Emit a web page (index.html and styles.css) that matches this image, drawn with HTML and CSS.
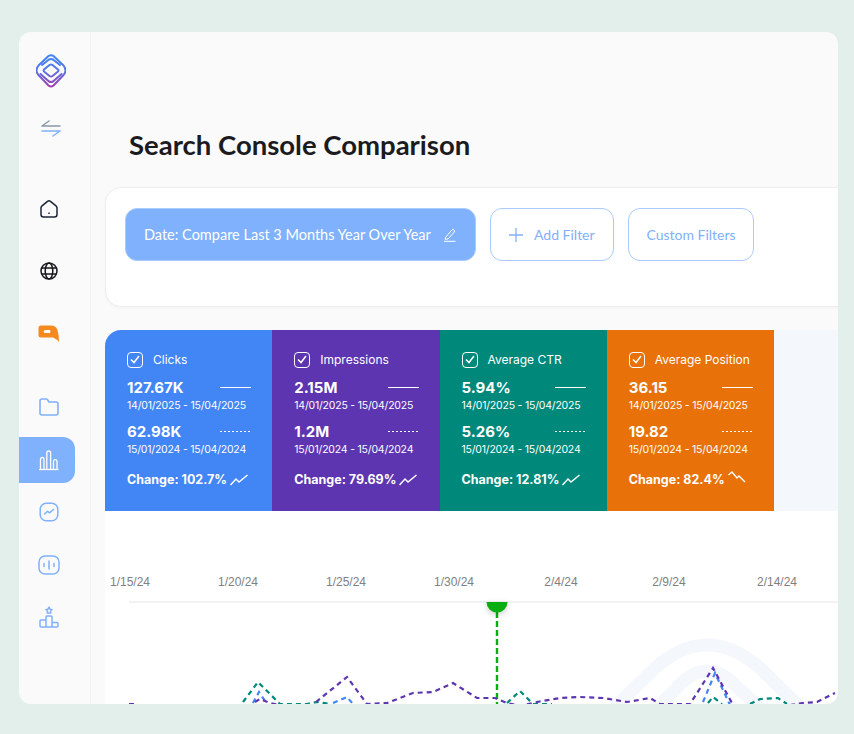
FILE: index.html
```html
<!DOCTYPE html>
<html lang="en">
<head>
    <meta charset="UTF-8">
    <meta name="viewport" content="width=device-width, initial-scale=1.0">
    <title>Search Console Comparison</title>
    <link rel="stylesheet" href="styles.css">
</head>
<body>
    <div class="app">
        <!-- sidebar -->
        <div class="sidebar">
            <svg class="logo" width="30" height="34" viewBox="0 0 30 34" fill="none" stroke="url(#logo-grad)" stroke-width="2" stroke-linecap="round" stroke-linejoin="round">
                <defs>
                    <linearGradient id="logo-grad" gradientUnits="userSpaceOnUse" x1="0" y1="4" x2="0" y2="32">
                        <stop offset="0" stop-color="#3f83f4"/>
                        <stop offset="0.5" stop-color="#5f6fe0"/>
                        <stop offset="1" stop-color="#a040b0"/>
                    </linearGradient>
                </defs>
                <path d="M12.500 2Q15 .5 17.500 2L27.500 11.500Q29.500 14 29.500 16.500T27.500 21L17.500 31.500Q15 33.500 12.500 31.500L2.500 21Q.5 19 .5 16.500T2.500 11.500Z"/>
                <path d="M6 11 13 5.500Q15 4.500 17 5.500L24 11"/>
                <path d="M13.500 11Q15 10 16.500 11L22 15.500Q23 16.500 22 17.500L16.500 22Q15 23 13.500 22L8 17.500Q7 16.500 8 15.500Z"/>
                <path d="M4.500 20 13 27.500Q15 28.500 17 27.500L25.500 20"/>
            </svg>
            <svg class="swap" width="20" height="18" viewBox="0 0 20 18" fill="none" stroke-width="1.500" stroke-linecap="round">
                <path d="M1 7H19M1 7 8 2" stroke="#8b98a8"/>
                <path d="M1 12H19M19 12 12 17" stroke="#80b1fc"/>
            </svg>

            <div class="nav-top">
                <div class="nav-item">
                    <svg width="20" height="20" viewBox="0 0 20 20" fill="none" stroke="#1c2536" stroke-width="1.500" stroke-linejoin="round">
                        <path d="M8.500 2.300 3 6.800Q2 7.600 2 8.800V15.500Q2 18 4.500 18H15.500Q18 18 18 15.500V8.800Q18 7.600 17 6.800L11.500 2.300Q10 1.200 8.500 2.300Z"/>
                        <path d="M10 13.500V15"/>
                    </svg>
                </div>
                <div class="nav-item">
                    <svg width="20" height="20" viewBox="0 0 20 20" fill="none" stroke="#16181d" stroke-width="1.500">
                        <circle cx="10" cy="10" r="8"/>
                        <ellipse cx="10" cy="10" rx="3.800" ry="8"/>
                        <path d="M2.500 7H17.500M2.500 13H17.500"/>
                    </svg>
                </div>
                <div class="nav-item">
                    <svg width="22" height="20" viewBox="0 0 22 20" fill="#f5891f">
                        <path fill-rule="evenodd" d="M3 2.500H13Q18 2.500 19.500 7Q21 12 21 19.500Q19 16 15 14.500H3Q.5 14.500 .5 12V5Q.5 2.500 3 2.500ZM7.200 7Q5.700 7 5.700 8.500T7.200 10H12.300V7Z"/>
                    </svg>
                </div>
            </div>

            <div class="nav-bottom">
                <div class="nav-item">
                    <svg width="22" height="20" viewBox="0 0 22 20" fill="none" stroke="#80b1fc" stroke-width="1.600" stroke-linejoin="round">
                        <path d="M2 4Q2 2 4 2H8Q9 2 9.700 3L11 5H18Q20 5 20 7V16Q20 18 18 18H4Q2 18 2 16Z"/>
                    </svg>
                </div>
                <div class="nav-item nav-active">
                    <svg width="22" height="22" viewBox="0 0 22 22" fill="none" stroke="#fff" stroke-width="1.300" stroke-linejoin="round">
                        <path d="M1 20.500H20.500"/>
                        <path d="M2.500 20.500V10.500Q2.500 8.500 4.300 8.500T6 10.500V20.500"/>
                        <path d="M8.800 20.500V4Q8.800 2 10.700 2T12.600 4V20.500"/>
                        <path d="M15.500 20.500V12.500Q15.500 10.700 17.200 10.700T19 12.500V20.500"/>
                    </svg>
                </div>
                <div class="nav-item">
                    <svg width="20" height="20" viewBox="0 0 20 20" fill="none" stroke="#80b1fc" stroke-width="1.500" stroke-linecap="round" stroke-linejoin="round">
                        <rect x="1.200" y="1.200" width="17.600" height="17.600" rx="6"/>
                        <path d="M5.500 12 8.500 9.300 10.500 10.800 14.500 7.500"/>
                    </svg>
                </div>
                <div class="nav-item">
                    <svg width="22" height="20" viewBox="0 0 22 20" fill="none" stroke="#80b1fc" stroke-width="1.500" stroke-linecap="round">
                        <rect x="1" y="1" width="20" height="18" rx="6"/>
                        <path d="M6 8.500V11.500M11 6V14M16 8.500V11.500"/>
                    </svg>
                </div>
                <div class="nav-item">
                    <svg width="20" height="22" viewBox="0 0 20 22" fill="none" stroke="#80b1fc" stroke-width="1.500" stroke-linejoin="round">
                        <path d="M10 1.200 11 3.200 13 3.500 11.500 5 11.800 7H8.200L8.500 5 7 3.500 9 3.200Z"/>
                        <path d="M7 21V11Q7 10 8 10H12Q13 10 13 11V21"/>
                        <path d="M7 14H2Q1 14 1 15V20Q1 21 2 21H18Q19 21 19 20V17.500Q19 16.500 18 16.500H13"/>
                    </svg>
                </div>
            </div>
        </div>

        <!-- main content -->
        <div class="main">
            <h1 class="page-title">Search Console Comparison</h1>

            <div class="filters">
                <button class="filter-date">
                    Date: Compare Last 3 Months Year Over Year
                    <svg width="14" height="14" viewBox="0 0 14 14" fill="none" stroke="#fff" stroke-width="1" stroke-linejoin="round">
                        <path d="M2.500 9.500 8.800 2Q9.700 1 10.800 1.800T11.300 4L5 11 2.200 11.300Z"/>
                        <path d="M1 13.300H12.500"/>
                    </svg>
                </button>
                <button class="filter-btn">
                    <svg width="14" height="14" viewBox="0 0 14 14" stroke="#80b1fc" stroke-width="1.300"><path d="M7 0V14M0 7H14"/></svg>
                    <span class="add-label">Add Filter</span>
                </button>
                <button class="filter-btn custom">Custom Filters</button>
            </div>

            <div class="metrics">
                <div class="metric blue">
                    <div class="metric-head"><span class="check"><svg width="10" height="9" viewBox="0 0 10 9" fill="none" stroke="#fff" stroke-width="1.500"><path d="M1 4.500 4 7.500 9 1"/></svg></span>Clicks</div>
                    <div class="metric-row"><strong>127.67K</strong><i class="line"></i></div>
                    <div class="metric-date">14/01/2025 - 15/04/2025</div>
                    <div class="metric-row second"><strong>62.98K</strong><i class="line dashed"></i></div>
                    <div class="metric-date">15/01/2024 - 15/04/2024</div>
                    <div class="metric-change">Change: 102.7%<svg width="18" height="12" viewBox="0 0 18 12" fill="none" stroke="#fff" stroke-width="1.400"><path d="M.5 11 6 5 9 8 17.500 1"/></svg></div>
                </div>
                <div class="metric purple">
                    <div class="metric-head"><span class="check"><svg width="10" height="9" viewBox="0 0 10 9" fill="none" stroke="#fff" stroke-width="1.500"><path d="M1 4.500 4 7.500 9 1"/></svg></span>Impressions</div>
                    <div class="metric-row"><strong>2.15M</strong><i class="line"></i></div>
                    <div class="metric-date">14/01/2025 - 15/04/2025</div>
                    <div class="metric-row second"><strong>1.2M</strong><i class="line dashed"></i></div>
                    <div class="metric-date">15/01/2024 - 15/04/2024</div>
                    <div class="metric-change">Change: 79.69%<svg width="18" height="12" viewBox="0 0 18 12" fill="none" stroke="#fff" stroke-width="1.400"><path d="M.5 11 6 5 9 8 17.500 1"/></svg></div>
                </div>
                <div class="metric teal">
                    <div class="metric-head"><span class="check"><svg width="10" height="9" viewBox="0 0 10 9" fill="none" stroke="#fff" stroke-width="1.500"><path d="M1 4.500 4 7.500 9 1"/></svg></span>Average CTR</div>
                    <div class="metric-row"><strong>5.94%</strong><i class="line"></i></div>
                    <div class="metric-date">14/01/2025 - 15/04/2025</div>
                    <div class="metric-row second"><strong>5.26%</strong><i class="line dashed"></i></div>
                    <div class="metric-date">15/01/2024 - 15/04/2024</div>
                    <div class="metric-change">Change: 12.81%<svg width="18" height="12" viewBox="0 0 18 12" fill="none" stroke="#fff" stroke-width="1.400"><path d="M.5 11 6 5 9 8 17.500 1"/></svg></div>
                </div>
                <div class="metric orange">
                    <div class="metric-head"><span class="check"><svg width="10" height="9" viewBox="0 0 10 9" fill="none" stroke="#fff" stroke-width="1.500"><path d="M1 4.500 4 7.500 9 1"/></svg></span>Average Position</div>
                    <div class="metric-row"><strong>36.15</strong><i class="line"></i></div>
                    <div class="metric-date">14/01/2025 - 15/04/2025</div>
                    <div class="metric-row second"><strong>19.82</strong><i class="line dashed"></i></div>
                    <div class="metric-date">15/01/2024 - 15/04/2024</div>
                    <div class="metric-change">Change: 82.4%<svg class="trend-down" width="18" height="12" viewBox="0 0 18 12" fill="none" stroke="#fff" stroke-width="1.400"><path d="M.5 4 4 1 9 7 11 5 17 11"/></svg></div>
                </div>
                <div class="metric-empty"></div>
            </div>

            <!-- chart, drawn in page coordinates -->
            <svg class="chart" width="733" height="193" viewBox="105 511 733 193" fill="none">
                <g class="watermark">
                    <path d="M612 710 655 668Q707 622 760 668L803 710"/>
                    <path d="M652 712 675 690Q707 652 740 690L765 712"/>
                </g>
                <g class="axis-labels">
                    <text x="130" y="586">1/15/24</text>
                    <text x="238" y="586">1/20/24</text>
                    <text x="346" y="586">1/25/24</text>
                    <text x="454" y="586">1/30/24</text>
                    <text x="561" y="586">2/4/24</text>
                    <text x="669" y="586">2/9/24</text>
                    <text x="777" y="586">2/14/24</text>
                </g>
                <path d="M129 602H838" stroke="#eee" stroke-width="1.500"/>
                <path d="M497 612V704" stroke="#0bae12" stroke-width="2.400" stroke-dasharray="6 3"/>
                <path class="marker" d="M486.500 602A10.500 10.500 0 0 0 507.500 602Z" fill="#0bae12"/>
                <path class="series" stroke="#00897b" d="M243 702 258 682 280 704H307L317 702 330 704M507 703 520 691 533 704H552M708 703 713 697 722 704M750 704 760 699 778 698 787 704"/>
                <path class="series" stroke="#4285f4" d="M253 703 259 692 267 704M333 703 347 697 353 704M703 702 715 673 730 705"/>
                <path class="series" stroke="#5e35b1" d="M129 704H135M255 702 260 699 270 703 280 705M316 702 347 677 367 704 387 703 413 693 433 692 453 683 477 698 495 698 507 703 520 706 537 702 560 698 580 697 603 698 627 702 650 698 660 704H690L713 668 733 705M790 705 803 703 817 702 835 693"/>
            </svg>
        </div>
    </div>
</body>
</html>
```

FILE: styles.css
```css
body {
    margin: 0;
    height: 734px;
    box-sizing: border-box;
    padding: 32px 16px 30px 19px;
    background-color: #e3efea;
    overflow: hidden;
    font-family: "Inter", sans-serif;
}
.app {
    display: flex;
    height: 672px;
    background-color: #fafafa;
    border-radius: 12px;
    overflow: hidden;
}

/* sidebar */
.sidebar {
    width: 71px;
    flex-shrink: 0;
    border-right: 1px solid #f1f2f3;
    display: flex;
    flex-direction: column;
}
.logo {
    display: block;
    flex-shrink: 0;
    margin: 22px 0 0 17px;
}
.swap {
    display: block;
    flex-shrink: 0;
    margin: 31px 0 0 22px;
}
.nav-top {
    margin-top: 41px;
}
.nav-top .nav-item {
    height: 62px;
}
.nav-bottom {
    margin-top: 17px;
}
.nav-bottom .nav-item {
    height: 52.500px;
}
.nav-item {
    width: 60px;
    display: flex;
    align-items: center;
    justify-content: center;
}
.nav-active {
    width: 56px;
    padding-left: 4px;
    box-sizing: border-box;
    height: 46px !important;
    margin: 3.250px 0;
    background-color: #80b1fc;
    border-radius: 0 12px 12px 0;
}

/* main content */
.main {
    flex: 1;
    min-width: 0;
    padding-left: 14px;
}
.page-title {
    margin: 93px 0 0 24px;
    height: 62px;
    font-family: "Lato", sans-serif;
    font-size: 27.500px;
    font-weight: 700;
    line-height: 40px;
    color: #1b1b1f;
}
.filters {
    display: flex;
    align-items: flex-start;
    gap: 14px;
    height: 120px;
    box-sizing: border-box;
    margin-right: -20px;
    padding: 20px 19px;
    background: white;
    border: 1px solid #eeeeee;
    border-radius: 16px;
    box-shadow: 0 1px 3px rgba(0, 0, 0, 0.04);
}
.filters button {
    height: 53px;
    border-radius: 12px;
    font-family: "Lato", sans-serif;
    font-size: 14px;
    white-space: nowrap;
    display: flex;
    align-items: center;
    cursor: pointer;
}
.filters .filter-date {
    width: 351px;
    padding: 0 18px;
    justify-content: space-between;
    background-color: #80b1fc;
    border: 1px solid #a9cbfd;
    color: white;
    font-size: 14.500px;
}
.filter-btn {
    width: 124px;
    padding: 0 18px;
    background: white;
    border: 1px solid #a9cbfd;
    color: #80b1fc;
}
.filter-btn.custom {
    width: 126px;
    justify-content: center;
    padding: 0;
}
.add-label {
    margin-left: 11px;
}

/* metric cards */
.metrics {
    display: flex;
    height: 181px;
    margin-top: 23px;
    margin-right: -20px;
    background-color: #f4f7fc;
    border-radius: 16px 0 0 0;
    overflow: hidden;
    color: white;
}
.metric {
    width: 167.250px;
    flex-shrink: 0;
    box-sizing: border-box;
    padding: 21px 21px 0 22px;
}
.blue { background-color: #4285f4; }
.purple { background-color: #5e35b1; }
.teal { background-color: #00897b; }
.orange { background-color: #e8710a; }
.metric-empty {
    flex: 1;
}
.metric-head {
    display: flex;
    align-items: center;
    gap: 10px;
    height: 17px;
    font-size: 12px;
    white-space: nowrap;
}
.check {
    width: 16px;
    height: 16px;
    flex-shrink: 0;
    box-sizing: border-box;
    border: 1.300px solid white;
    border-radius: 4px;
    display: flex;
    align-items: center;
    justify-content: center;
}
.metric-row {
    display: flex;
    align-items: center;
    justify-content: space-between;
    margin-top: 11px;
    height: 17px;
    font-size: 15px;
}
.metric-row.second {
    margin-top: 10px;
}
.line {
    width: 31px;
    height: 1px;
    background-color: white;
}
.line.dashed {
    background: repeating-linear-gradient(90deg, white 0 2.500px, transparent 2.500px 4px);
}
.metric-date {
    font-size: 10.500px;
    letter-spacing: -0.2px;
    line-height: 14px;
    margin-top: 3px;
}
.metric-change {
    display: flex;
    align-items: center;
    gap: 3px;
    margin-top: 15px;
    font-size: 12.500px;
    font-weight: 700;
}
.trend-down {
    margin-top: -5px;
}

/* chart */
.chart {
    display: block;
    background: white;
}
.axis-labels text {
    font-family: "Liberation Sans", sans-serif;
    font-size: 12px;
    fill: #808080;
    text-anchor: middle;
}
.watermark path {
    stroke: #f4f7fc;
    stroke-width: 13;
}
.series {
    stroke-width: 2.200;
    stroke-dasharray: 5 4;
}
.marker {
    filter: drop-shadow(0 2px 3px rgba(0, 0, 0, 0.2));
}
```
